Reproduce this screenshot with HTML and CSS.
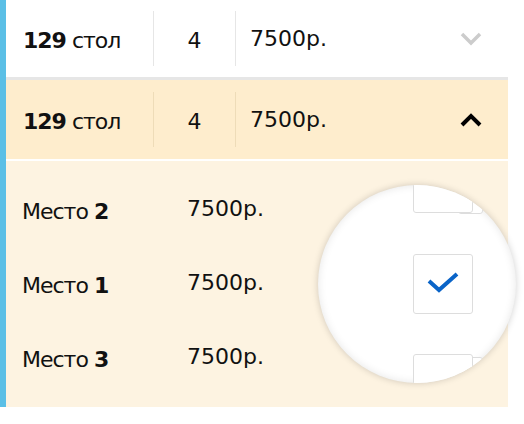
FILE: index.html
```html
<!DOCTYPE html>
<html lang="ru">
<head>
  <meta charset="UTF-8">
  <title>Столы</title>
  <link rel="stylesheet" href="styles.css">
</head>
<body>
  <div class="list">
    <div class="row">
      <div class="cell name"><span><b>129</b> стол</span></div>
      <div class="cell seats">4</div>
      <div class="cell price">7500р.</div>
      <svg class="chevron" width="22" height="14" viewBox="0 0 22 14"><path d="M2 2 L11 11 L20 2" fill="none" stroke="#cccccc" stroke-width="3.5"/></svg>
    </div>

    <!-- открытый стол -->
    <div class="row open">
      <div class="cell name"><span><b>129</b> стол</span></div>
      <div class="cell seats">4</div>
      <div class="cell price">7500р.</div>
      <svg class="chevron" width="22" height="14" viewBox="0 0 22 14"><path d="M2 12 L11 3 L20 12" fill="none" stroke="#000000" stroke-width="4"/></svg>
    </div>

    <div class="places">
      <div class="place"><span class="place-name">Место <b>2</b></span><span class="place-price">7500р.</span></div>
      <div class="place"><span class="place-name">Место <b>1</b></span><span class="place-price">7500р.</span></div>
      <div class="place"><span class="place-name">Место <b>3</b></span><span class="place-price">7500р.</span></div>

      <!-- лупа над чекбоксами -->
      <div class="lens">
        <span class="box small top"></span>
        <span class="box small bottom"></span>
        <span class="box big first"></span>
        <span class="box big second">
          <svg width="34" height="24" viewBox="0 0 34 24"><path d="M3 9 L13 18 L31 2" fill="none" stroke="#0a64c8" stroke-width="4"/></svg>
        </span>
        <span class="box big third"></span>
      </div>
    </div>
  </div>
</body>
</html>
```

FILE: styles.css
```css
body {
  margin: 0;
  background-color: white;
  font-family: "DejaVu Sans", Verdana, sans-serif;
  color: #111;
}

.list {
  width: 502px;
  border-left: 6px solid #5bbfe6;
}

.row {
  display: flex;
  align-items: center;
  height: 77px;
  border-bottom: 3px solid #e6e6e6;
  font-size: 22px;
}

.row.open {
  height: 79px;
  border-bottom: 2px solid white;
  background-color: #feedcd;
}

.cell {
  height: 55px;
  display: flex;
  align-items: center;
  padding-top: 3px;
  box-sizing: border-box;
}

.name {
  width: 148px;
  padding-left: 17px;
  letter-spacing: -1px;
  border-right: 1px solid #e6e6e6;
}

.seats {
  width: 82px;
  justify-content: center;
  border-right: 1px solid #e6e6e6;
}

.open .name,
.open .seats { border-right-color: #eedcb8; }

.price {
  padding-left: 14px;
  padding-top: 0;
}

.chevron {
  margin-left: auto;
  margin-right: 26px;
}

/* Места */
.places {
  position: relative;
  height: 246px;
  padding: 13px 0 10px;
  box-sizing: border-box;
  background-color: #fdf3e1;
  font-size: 22px;
}

.place {
  display: flex;
  align-items: center;
  height: 74px;
  padding-left: 16px;
}

.place-name {
  width: 165px;
  letter-spacing: -1px;
}

.place-price { margin-top: -6px; }

.lens {
  position: absolute;
  left: 312px;
  top: 24px;
  width: 198px;
  height: 198px;
  border-radius: 50%;
  overflow: hidden;
  background-color: white;
  box-shadow: 0 0 7px rgba(0, 0, 0, 0.18), inset 0 0 8px rgba(0, 0, 0, 0.1);
}

.box {
  position: absolute;
  display: flex;
  align-items: center;
  justify-content: center;
  background-color: white;
  border: 1px solid #dddddd;
  border-radius: 3px;
  box-sizing: border-box;
}

.box.big { left: 95px; width: 60px; height: 60px; }
.box.first { top: -32px; }
.box.second { top: 69px; }
.box.third { top: 169px; }

.box.small { left: 140px; width: 25px; height: 17px; }
.box.small.top { top: 12px; }
.box.small.bottom { top: 172px; }
```
